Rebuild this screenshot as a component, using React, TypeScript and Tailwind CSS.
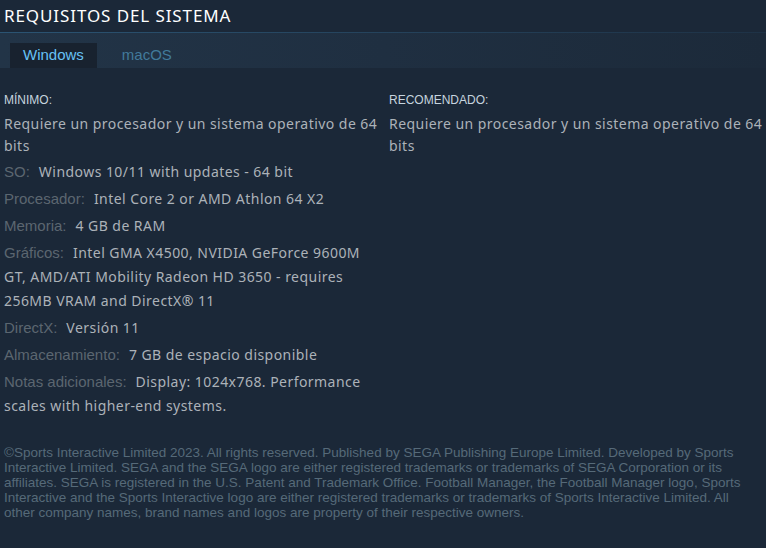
import React from "react";

const arial = { fontFamily: '"Liberation Sans", Arial, sans-serif' };
const noto = { fontFamily: '"Noto Sans", "Open Sans", sans-serif' };

type Item = { label: string; value: string };

const minItems: Item[] = [
  { label: "SO:", value: "Windows 10/11 with updates - 64 bit" },
  { label: "Procesador:", value: "Intel Core 2 or AMD Athlon 64 X2" },
  { label: "Memoria:", value: "4 GB de RAM" },
  {
    label: "Gráficos:",
    value:
      "Intel GMA X4500, NVIDIA GeForce 9600M GT, AMD/ATI Mobility Radeon HD 3650 - requires 256MB VRAM and DirectX® 11",
  },
  { label: "DirectX:", value: "Versión 11" },
  { label: "Almacenamiento:", value: "7 GB de espacio disponible" },
  {
    label: "Notas adicionales:",
    value: "Display: 1024x768. Performance scales with higher-end systems.",
  },
];

function Col({ title, items, width }: { title: string; items: Item[]; width: string }) {
  return (
    <div className={width + " shrink-0"}>
      <div className="text-[12px] leading-[16px] text-[#c6d4df] uppercase" style={arial}>
        {title}
      </div>
      <div
        className="mt-[5px] text-[14px] leading-[22px] tracking-[0.45px] text-[#acb2b8]"
        style={noto}
      >
        Requiere un procesador y un sistema operativo de 64 bits
      </div>
      <ul className="mt-[3px] pr-[8px]">
        {items.map((it) => (
          <li
            key={it.label}
            className="mb-[3px] text-[14px] leading-[24px] tracking-[0.45px] text-[#acb2b8]"
            style={noto}
          >
            <span className="text-[15px] tracking-normal text-[#5b6670] mr-[9px]" style={arial}>
              {it.label}
            </span>
            {it.value}
          </li>
        ))}
      </ul>
    </div>
  );
}

export default function App() {
  return (
    <div className="w-[766px] h-[548px] bg-[#1b2838] overflow-hidden">
      <h2
        className="px-[4px] pt-[4px] h-[32px] text-[17px] leading-[24px] text-white tracking-[0.9px]"
        style={noto}
      >
        REQUISITOS DEL SISTEMA
      </h2>
      <div className="h-px bg-gradient-to-r from-[#2b5473] to-[#1e3246]" />
      <div className="h-[35px] flex items-end pl-[10px] gap-[12px] bg-gradient-to-r from-[#223447] via-[#1f2f41] to-[#1c2a3a]">
        <div
          className="h-[25px] px-[13px] flex items-center bg-[#18222f] text-[15px] text-[#67c1f5]"
          style={arial}
        >
          Windows
        </div>
        <div className="h-[25px] px-[13px] flex items-center text-[15px] text-[#417a9b]" style={arial}>
          macOS
        </div>
      </div>
      <div className="flex px-[4px] pt-[24px]">
        <Col title="Mínimo:" items={minItems} width="w-[385px]" />
        <Col title="Recomendado:" items={[]} width="w-[377px]" />
      </div>
      <p
        className="px-[4px] mt-[24px] text-[13.5px] leading-[15px] text-[#566a79]"
        style={arial}
      >
        ©Sports Interactive Limited 2023. All rights reserved. Published by SEGA Publishing Europe Limited. Developed by
        Sports Interactive Limited. SEGA and the SEGA logo are either registered trademarks or trademarks of SEGA
        Corporation or its affiliates. SEGA is registered in the U.S. Patent and Trademark Office. Football Manager, the
        Football Manager logo, Sports Interactive and the Sports Interactive logo are either registered trademarks or
        trademarks of Sports Interactive Limited. All other company names, brand names and logos are property of their
        respective owners.
      </p>
    </div>
  );
}
